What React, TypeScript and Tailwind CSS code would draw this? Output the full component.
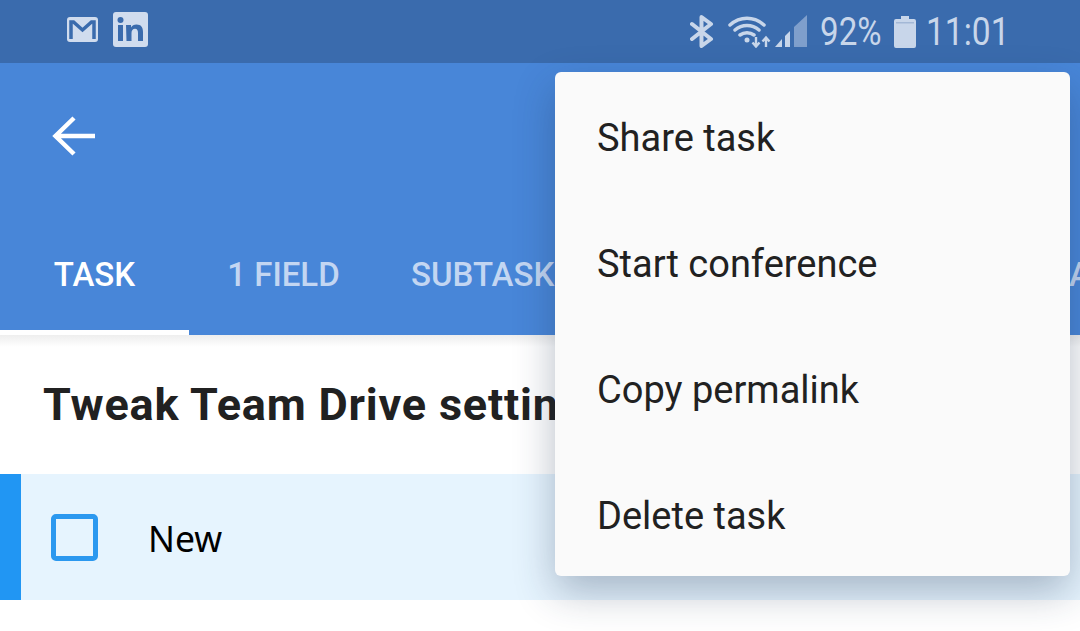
const menuItems = ['Share task', 'Start conference', 'Copy permalink', 'Delete task'];

function StatusBar() {
  return (
    <div className="h-[63px] bg-[#3a6bad] flex items-center justify-between pl-[67px] pr-[72px] text-[#c8d6ea]">
      <div className="flex items-center gap-[15px] -mt-[4px]">
        <svg width="31" height="26" viewBox="0 0 31 26">
          <rect x="0" y="0" width="31" height="25" rx="3" fill="#d0dcee" />
          <path d="M4 22V5h2.500L15.500 13 24.500 5H27V22" fill="none" stroke="#3a6bad" strokeWidth="3.500" />
        </svg>
        <svg width="35" height="35" viewBox="0 0 35 35">
          <rect width="35" height="35" rx="3" fill="#d0dcee" />
          <circle cx="7.500" cy="8" r="3" fill="#3a6bad" />
          <rect x="5" y="13" width="5" height="16" fill="#3a6bad" />
          <path d="M13 13h5v2.500c1-1.800 3-2.900 5.500-2.900 4.500 0 6.500 2.700 6.500 7.400v9h-5v-8c0-2.600-.8-4.200-3-4.200s-3.500 1.600-3.500 4.200v8h-5z" fill="#3a6bad" />
        </svg>
      </div>
      <div className="flex items-center">
        <svg width="24" height="33" viewBox="0 0 24 33" className="mr-[14px]">
          <path d="M2 9l19 15-9.500 7V2L21 9 2 24" fill="none" stroke="#c8d6ea" strokeWidth="4" strokeLinejoin="round" strokeLinecap="round" />
        </svg>
        <svg width="44" height="32" viewBox="0 0 44 32" className="mr-[3px]">
          <path d="M2 9c10-9 24-9 34 0M7 14c7-6 17-6 24 0M12 19c4-3 10-3 14 0" fill="none" stroke="#c8d6ea" strokeWidth="3.500" strokeLinecap="round" />
          <circle cx="19" cy="24" r="2.500" fill="#c8d6ea" />
          <path d="M28 21v9M24.500 26.500l3.500 4 3.500-4M38 31v-9M34.500 25.500l3.500-4 3.500 4" fill="none" stroke="#c8d6ea" strokeWidth="2.400" />
        </svg>
        <svg width="32" height="33" viewBox="0 0 32 33" className="mr-[13px]">
          <path d="M0 32l7-8v8z" fill="#c8d6ea" />
          <path d="M10 32V21l5-5v16z" fill="#c8d6ea" />
          <path d="M19 32V12L32 0v32z" fill="#7f9fcc" />
        </svg>
        <span className="w-[62px] inline-block origin-left scale-x-[0.85] font-['Roboto',sans-serif] text-[39px] leading-none mt-[1px] mr-[12px]">92%</span>
        <svg width="22" height="32" viewBox="0 0 22 32" className="mr-[10px]">
          <path d="M7 0h8v3h5a2 2 0 0 1 2 2v25a2 2 0 0 1-2 2H2a2 2 0 0 1-2-2V5a2 2 0 0 1 2-2h5z" fill="#c8d6ea" />
          <rect x="2" y="6" width="18" height="1.500" fill="#a3b8d6" />
        </svg>
        <span className="w-[82px] inline-block origin-left scale-x-[0.86] font-['Roboto',sans-serif] text-[39px] leading-none mt-[1px]">11:01</span>
      </div>
    </div>
  );
}

function AppBar() {
  return (
    <div className="h-[272px] bg-[#4886d8] flex flex-col">
      <div className="h-[146px] pl-[52px] pt-[51px]">
        <svg width="44" height="44" viewBox="0 0 44 44">
          <path d="M43 22H4M22 4L3.500 22 22 40" fill="none" stroke="#fff" strokeWidth="4.500" />
        </svg>
      </div>
      <div className="flex-1 flex overflow-hidden font-['Roboto',sans-serif] font-medium text-[33px] leading-none text-[#c3d6f2]">
        <div className="w-[189px] shrink-0 flex items-center justify-center pt-[10px] text-white border-b-[5px] border-white">TASK</div>
        <div className="w-[189px] shrink-0 flex items-center justify-center pt-[10px] border-b-[5px] border-transparent">1 FIELD</div>
        <div className="w-[229px] shrink-0 flex items-center pl-[33px] pt-[10px] border-b-[5px] border-transparent">SUBTASKS</div>
        <div className="shrink-0 flex items-center pl-[462px] pt-[10px] border-b-[5px] border-transparent">A</div>
      </div>
    </div>
  );
}

export default function App() {
  return (
    <div className="relative w-[1080px] h-[631px] overflow-hidden bg-white font-['Roboto',sans-serif]">
      <StatusBar />
      <AppBar />
      <div className="h-[139px] pl-[43px] pt-[41px] bg-gradient-to-b from-[#eeeeee] to-white to-[12px]">
        <div className="font-['Roboto',sans-serif] font-bold text-[45px] tracking-[0.8px] leading-[58px] text-[#212121] whitespace-nowrap">
          Tweak Team Drive settings
        </div>
      </div>
      <div className="h-[126px] bg-[#e6f4fe] border-l-[21px] border-[#2196f3] flex items-center pl-[30px]">
        <div className="w-[47px] h-[47px] border-[5px] border-[#2b98ef] rounded-[5px]" />
        <div className="ml-[50px] pt-[3px] font-['Noto_Sans',sans-serif] text-[35.500px] text-black leading-none">New</div>
      </div>

      <div className="absolute left-[555px] top-[72px] w-[515px] h-[504px] bg-[#fafafa] rounded-[6px] shadow-[0_16px_40px_rgba(30,50,80,0.32)] flex flex-col">
        {menuItems.map((item) => (
          <div key={item} className="h-[126px] flex items-center pl-[42px] pt-[6px] text-[38px] text-[#212121]">
            {item}
          </div>
        ))}
      </div>
    </div>
  );
}
